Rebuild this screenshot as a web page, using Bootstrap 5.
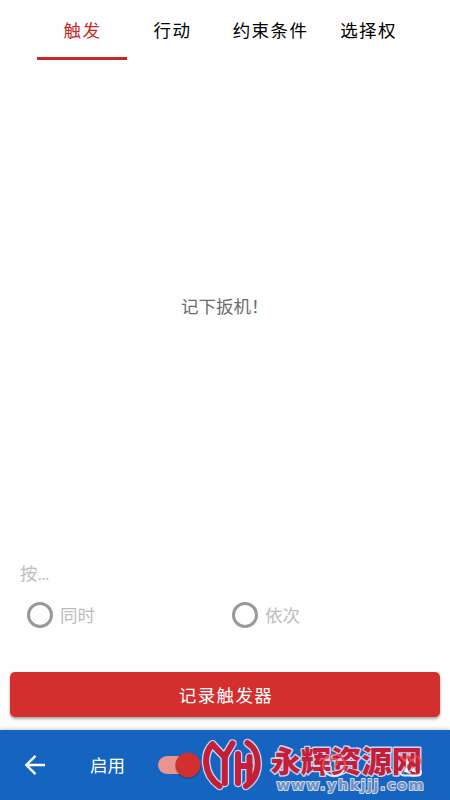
<!DOCTYPE html>
<html lang="zh-CN">
<head>
  <meta charset="UTF-8">
  <meta name="viewport" content="width=device-width, initial-scale=1.0">
  <title>触发</title>
  <link href="https://cdn.jsdelivr.net/npm/bootstrap@5.3.0/dist/css/bootstrap.min.css" rel="stylesheet">
  <style>
    body {
      font-family: Roboto, "Noto Sans CJK SC", sans-serif;
      font-size: 17.5px;
      line-height: 26px;
      background-color: #fefefe;
    }
    .tabs { padding-left: 37px; height: 60px; }
    .tabs .nav-link {
      width: 90px;
      height: 60px;
      padding: 18px 0 0 1px;
      color: #000;
      letter-spacing: 1.4px;
      text-align: center;
      border-radius: 0;
      border-bottom: 3px solid transparent;
    }
    .tabs .nav-link.wide { width: 106px; }
    .tabs .nav-link.active { color: #c62828; border-bottom-color: #c62828; }
    .empty-text { color: #6c6c6c; padding-top: 234px; padding-left: 181px; height: 501px; }
    .press { color: #bdbdbd; padding-left: 20px; }
    .press span { letter-spacing: -.9px; }
    .choices { margin-top: 15px; height: 26px; }
    .choice { width: 205px; padding-left: 27px; gap: 7px; color: #bdbdbd; }
    .choice .name { height: 26px; line-height: 28px; }
    .ring { width: 26px; height: 26px; border: 3px solid #999; border-radius: 50%; }
    .record {
      height: 45px;
      margin: 44px 10px 0;
      padding: 4px 0 0 2px;
      background-color: #d32f2f;
      color: #fff;
      font-size: 17.5px;
      letter-spacing: 1.4px;
      border: 0;
      border-radius: 5px;
      box-shadow: 0 2px 3px rgba(0,0,0,0.35);
    }
    .bottom-bar {
      height: 70px;
      background-color: #1565c0;
      color: #fff;
      box-shadow: 0 -1px 4px rgba(0,0,0,0.2);
    }
    .bottom-bar .back { margin-left: 23px; }
    .bottom-bar .label { margin-left: 43px; padding-top: 2px; }
    .toggle { width: 44px; height: 28px; margin-left: 33px; }
    .site { width: 250px; height: 70px; }
  </style>
</head>
<body>
<div class="d-flex flex-column vh-100 overflow-hidden">
  <nav class="nav flex-nowrap tabs">
    <a class="nav-link active" href="#">触发</a>
    <a class="nav-link" href="#">行动</a>
    <a class="nav-link wide" href="#">约束条件</a>
    <a class="nav-link" href="#">选择权</a>
  </nav>

  <div class="empty-text">记下扳机！</div>

  <div class="press">按<span>...</span></div>
  <div class="d-flex choices">
    <div class="choice d-flex align-items-center"><span class="ring"></span><span class="name">同时</span></div>
    <div class="choice d-flex align-items-center"><span class="ring"></span><span class="name">依次</span></div>
  </div>

  <button class="btn record">记录触发器</button>

  <div class="bottom-bar d-flex align-items-center mt-auto position-relative">
    <svg class="back" width="24" height="24" viewBox="0 0 24 24" fill="none" stroke="#fff" stroke-width="2.4">
      <path d="M22 12H4M12.5 2.8L3.3 12l9.2 9.2"/>
    </svg>
    <div class="label">启用</div>
    <svg class="toggle" viewBox="0 0 44 28">
      <rect x="0" y="5" width="36" height="18" rx="9" fill="#e99393"/>
      <circle cx="30" cy="15" r="13" fill="#000" opacity=".2"/>
      <circle cx="30" cy="14" r="12.5" fill="#d32f2f"/>
    </svg>
    <svg class="site position-absolute top-0 end-0" viewBox="200 730 250 70">
      <defs>
        <g id="emblem" fill="none" stroke-linejoin="round" stroke-linecap="round">
          <path d="M212.500 744.500C203.500 753 202.500 774 219.500 786"/>
          <path d="M212.500 744.500L224.500 757L232.500 743.500"/>
          <path d="M224.800 757v26"/>
          <path d="M238 754v29M238 766h12M249.500 757v25"/>
          <path d="M247.500 743C261 751 262 775 246 786"/>
        </g>
      </defs>
      <use href="#emblem" stroke="#ccd3f2" stroke-width="8.600"/>
      <use href="#emblem" stroke="#c31f38" stroke-width="6"/>
      <text x="270.500" y="771.500" font-family="Liberation Sans, Noto Sans CJK SC, sans-serif" font-weight="900" font-size="30" textLength="151.500" lengthAdjust="spacingAndGlyphs" fill="#c31f38" stroke="#ccd3f2" stroke-width="2.800" stroke-linejoin="round" paint-order="stroke">永辉资源网</text>
      <!-- help and overflow buttons under the site name -->
      <g fill="none" stroke="#ff5650" stroke-width="1.800" opacity=".75">
        <path d="M324 770a11 11 0 1 1 20 0"/>
        <path d="M330.500 762a3.500 3.500 0 1 1 5 3.200q-1.500 1-1.500 3M334 770v2"/>
        <path d="M400 756l5 5 3-5 3 5 6-5M403 774l3-7M416 774l-4-8M418 757q3 2 3 7"/>
      </g>
      <path d="M400 771v1.500q1 3 4 3h14q3 0 3-3v-2" fill="none" stroke="#eef1ff" stroke-width="1.800"/>
      <path d="M324 770q3 6 10 6t10-6" fill="none" stroke="#e2e8ff" stroke-width="2"/>
      <path d="M404 772l2.500-6 2.500 6zM407 757l1.500 6-3 4zM412 772l1-5 3 5z" fill="#fff"/>
      <text x="276.500" y="789.500" font-family="DejaVu Sans, sans-serif" font-weight="bold" font-size="14.500" textLength="147" fill="#6f90bd" stroke="#d0dcf3" stroke-width="2" stroke-linejoin="round" paint-order="stroke">www.yhkjjj.com</text>
    </svg>
  </div>
</div>
<script src="https://cdn.jsdelivr.net/npm/bootstrap@5.3.0/dist/js/bootstrap.bundle.min.js"></script>
</body>
</html>
